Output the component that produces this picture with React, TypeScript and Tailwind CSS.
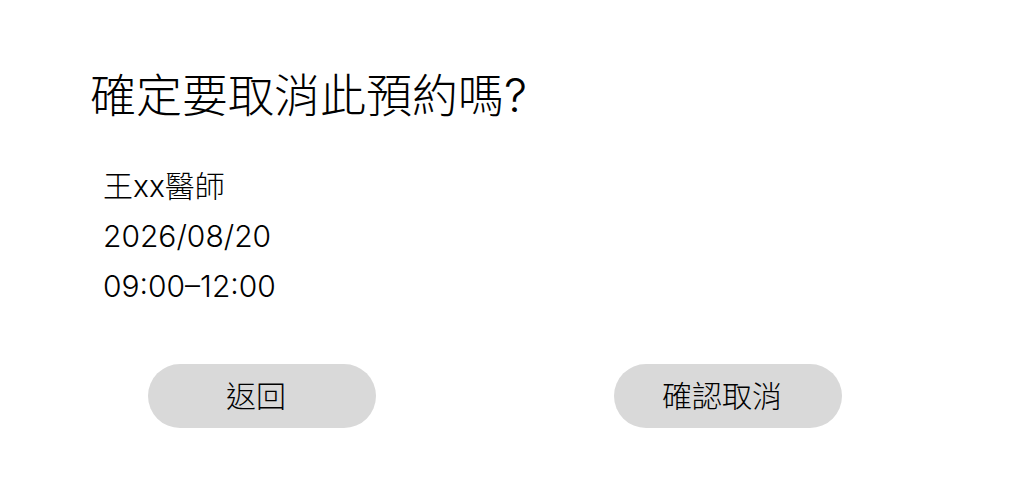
import React from 'react';

const font = { fontFamily: 'Inter, "Noto Sans CJK TC", sans-serif' };

function App() {
  return (
    <div className="min-h-screen w-full bg-white text-black" style={font}>
      <div className="flex flex-col pt-[64px] pl-[90px]">
        <h1 className="text-[46px] font-light leading-[62px]">確定要取消此預約嗎?</h1>

        <div className="mt-[35px] pl-[13px] flex flex-col text-[30px] font-light leading-[50px]">
          <p>王xx醫師</p>
          <p>2026/08/20</p>
          <p>09:00–12:00</p>
        </div>

        <div className="mt-[53px] flex pl-[58px] gap-[238px]">
          <button className="h-16 w-[228px] rounded-full bg-[#d9d9d9] pr-3 text-[30px] font-light">
            返回
          </button>
          <button className="h-16 w-[228px] rounded-full bg-[#d9d9d9] pr-3 text-[30px] font-light">
            確認取消
          </button>
        </div>
      </div>
    </div>
  );
}

export default App;
